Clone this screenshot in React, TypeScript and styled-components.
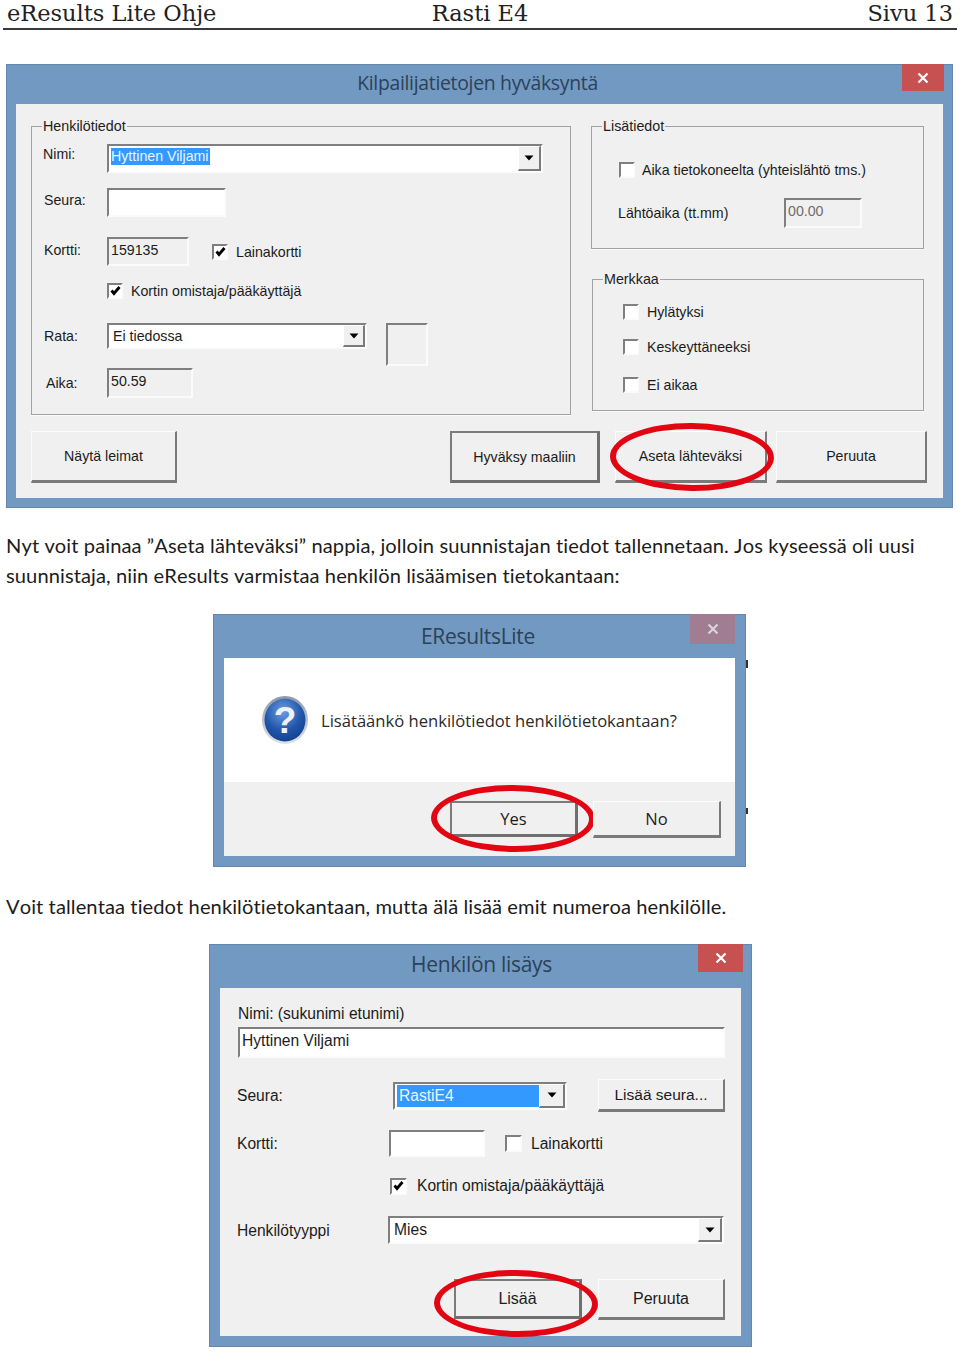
import React from "react";
import styled, { createGlobalStyle } from "styled-components";

const Global = createGlobalStyle`
  html, body { margin: 0; padding: 0; background: #fff; }
  #root { width: 960px; height: 1352px; overflow: hidden; }
`;

const Page = styled.div`
  width: 960px;
  height: 1352px;
  display: flex;
  flex-direction: column;
  background: #fff;
`;

const Header = styled.header`
  margin: 0 3px;
  box-sizing: content-box;
  height: 27px;
  display: grid;
  grid-template-columns: 1fr auto 1fr;
  align-items: center;
  padding: 0 4px 1px;
  border-bottom: 2px solid #3a3a3a;
  font-family: "DejaVu Serif", serif;
  font-size: 22.5px;
  line-height: 27px;
  color: #222;
`;

const HeaderRight = styled.span`
  text-align: right;
`;

const Win = styled.section<{ $x: number; $w: number; $top: number; $frame: number; $fs: number }>`
  position: relative;
  box-sizing: border-box;
  margin-top: ${(p) => p.$top}px;
  margin-left: ${(p) => p.$x}px;
  width: ${(p) => p.$w}px;
  padding: 0 ${(p) => p.$frame}px ${(p) => p.$frame}px;
  background: #7199c1;
  box-shadow: inset 0 0 0 1px #6487ab;
  font-family: "Liberation Sans", Arial, sans-serif;
  font-size: ${(p) => p.$fs}px;
  color: #1c1c1c;
`;

const TitleBar = styled.div<{ $h: number; $frame: number; $rm: number }>`
  height: ${(p) => p.$h}px;
  margin: 0 ${(p) => p.$rm - p.$frame}px 0 -${(p) => p.$frame}px;
  display: flex;
  align-items: flex-start;
`;

const Title = styled.div<{ $pad: number; $h: number; $size: number }>`
  flex: 1;
  padding-left: ${(p) => p.$pad}px;
  height: ${(p) => p.$h}px;
  line-height: ${(p) => p.$h}px;
  text-align: center;
  font-family: "Open Sans", sans-serif;
  font-size: ${(p) => p.$size}px;
  letter-spacing: -0.3px;
  color: #2c4258;
`;

const Close = styled.div<{ $w: number; $h: number; $bg: string }>`
  width: ${(p) => p.$w}px;
  height: ${(p) => p.$h}px;
  background: ${(p) => p.$bg};
  display: flex;
  align-items: center;
  justify-content: center;
`;

const CloseGlyph = ({ color = "#fff" }: { color?: string }) => (
  <svg width="12" height="12" viewBox="0 0 12 12">
    <path d="M1.5 1.5 10.5 10.5 M10.5 1.5 1.5 10.5" stroke={color} strokeWidth="2.2" fill="none" />
  </svg>
);

const Body = styled.div<{ $pad?: string }>`
  background: #f0f0f0;
  padding: ${(p) => p.$pad ?? "0"};
`;

const Columns = styled.div`
  display: flex;
  align-items: flex-start;
`;

const Stack = styled.div<{ $ml: number; $w: number }>`
  margin-left: ${(p) => p.$ml}px;
  width: ${(p) => p.$w}px;
  display: flex;
  flex-direction: column;
`;

const Group = styled.fieldset<{ $h: number; $mt?: number; $ml?: number }>`
  box-sizing: border-box;
  margin: ${(p) => p.$mt ?? 0}px 0 0 ${(p) => p.$ml ?? 0}px;
  min-width: 0;
  width: calc(100% - ${(p) => p.$ml ?? 0}px);
  height: ${(p) => p.$h}px;
  padding: 0 0 0 10px;
  border: 1px solid #a2a2a2;
  box-shadow: 0 1px 0 #fbfbfb;
`;

const Legend = styled.legend`
  margin-left: 0;
  padding: 0 1px;
  height: 18px;
  line-height: 18px;
  font-size: 14.3px;
`;

const Row = styled.div<{ $mt: number; $ml?: number; $align?: string }>`
  display: flex;
  align-items: ${(p) => p.$align ?? "center"};
  margin-top: ${(p) => p.$mt}px;
  margin-left: ${(p) => p.$ml ?? 0}px;
`;

const Label = styled.div<{ $w: number; $ml?: number; $h?: number }>`
  box-sizing: border-box;
  flex: none;
  width: ${(p) => p.$w}px;
  padding-left: ${(p) => p.$ml ?? 0}px;
  ${(p) => (p.$h ? `height: ${p.$h}px; line-height: ${p.$h}px;` : "")}
  white-space: nowrap;
`;

const Field = styled.div<{ $w: number; $h: number; $grey?: boolean; $ml?: number; $color?: string; $mb?: number }>`
  box-sizing: border-box;
  flex: none;
  width: ${(p) => p.$w}px;
  height: ${(p) => p.$h}px;
  margin-left: ${(p) => p.$ml ?? 0}px;
  border-style: solid;
  border-width: 2px;
  border-color: #7f7f7f #fbfbfb #fbfbfb #7f7f7f;
  background: ${(p) => (p.$grey ? "#f0f0f0" : "#fff")};
  color: ${(p) => p.$color ?? "inherit"};
  padding: 0 0 ${(p) => p.$mb ?? 4}px 2px;
  display: flex;
  align-items: center;
  white-space: nowrap;
`;

const Selected = styled.span<{ $fill?: boolean }>`
  background: #3399ff;
  color: #eaf4ff;
  line-height: 17px;
  height: 17px;
  padding: 0 1px 0 0;
  margin-bottom: 4px;
  ${(p) => (p.$fill ? "flex: 1; height: 22px; line-height: 22px; padding-left: 2px; margin-bottom: 0;" : "")}
`;

const ComboText = styled.div<{ $pl?: number }>`
  flex: 1;
  padding-left: ${(p) => p.$pl ?? 0}px;
  display: flex;
  align-items: center;
  min-width: 0;
`;

const ComboBtn = styled.div<{ $w: number }>`
  box-sizing: border-box;
  flex: none;
  align-self: stretch;
  width: ${(p) => p.$w}px;
  background: #f0f0f0;
  border-style: solid;
  border-width: 1px 2px 2px 1px;
  border-color: #fff #7a7a7a #7a7a7a #fff;
  display: flex;
  align-items: center;
  justify-content: center;
`;

const Arrow = () => (
  <svg width="10" height="6" viewBox="0 0 10 6">
    <path d="M0.5 0.5 H9.5 L5 5.5 Z" fill="#000" />
  </svg>
);

const ComboField = styled(Field)`
  padding: 0 0 0 1px;
  align-items: center;
`;

const Combo = ({ w, h, btn, ml, children, pl }: { w: number; h: number; btn: number; ml?: number; pl?: number; children: React.ReactNode }) => (
  <ComboField $w={w} $h={h} $ml={ml} $mb={0}>
    <ComboText $pl={pl}>{children}</ComboText>
    <ComboBtn $w={btn}>
      <Arrow />
    </ComboBtn>
  </ComboField>
);

const Swatch = styled(Field)`
  background: #f0f0f0;
`;

const Check = styled.label<{ $gap: number; $ml?: number }>`
  display: flex;
  align-self: center;
  align-items: center;
  gap: ${(p) => p.$gap}px;
  margin-left: ${(p) => p.$ml ?? 0}px;
  white-space: nowrap;
`;

const Box = styled.span<{ $size: number }>`
  box-sizing: border-box;
  flex: none;
  width: ${(p) => p.$size}px;
  height: ${(p) => p.$size}px;
  border-style: solid;
  border-width: 2px;
  border-color: #7f7f7f #fbfbfb #fbfbfb #7f7f7f;
  background: #fff;
  display: flex;
  align-items: center;
  justify-content: center;
`;

const Tick = () => (
  <svg width="11" height="10" viewBox="0 0 11 10">
    <path d="M1.5 4.5 4 7.5 9.5 1" stroke="#000" strokeWidth="2.8" fill="none" />
  </svg>
);

const CheckItem = ({ on, gap, size = 16, ml, children }: { on?: boolean; gap: number; size?: number; ml?: number; children: React.ReactNode }) => (
  <Check $gap={gap} $ml={ml}>
    <Box $size={size}>{on ? <Tick /> : null}</Box>
    <span>{children}</span>
  </Check>
);

const Btn = styled.div<{ $w: number; $h: number; $ml?: number; $default?: boolean; $size?: number; $font?: string }>`
  position: relative;
  box-sizing: border-box;
  flex: none;
  width: ${(p) => p.$w}px;
  height: ${(p) => p.$h}px;
  margin-left: ${(p) => p.$ml ?? 0}px;
  background: #f0f0f0;
  border-style: solid;
  border-width: ${(p) => (p.$default ? "2px 3px 3px 2px" : "1px 2px 3px 1px")};
  border-color: ${(p) => (p.$default ? "#7b7b7b #6f6f6f #6f6f6f #7b7b7b" : "#fcfcfc #7a7a7a #7a7a7a #fcfcfc")};
  display: flex;
  align-items: center;
  justify-content: center;
  font-size: ${(p) => p.$size ?? 14.2}px;
  ${(p) => (p.$font ? `font-family: ${p.$font};` : "")}
`;

const Oval = styled.div<{ $t: number; $r: number; $b: number; $l: number }>`
  position: absolute;
  top: ${(p) => p.$t}px;
  right: ${(p) => p.$r}px;
  bottom: ${(p) => p.$b}px;
  left: ${(p) => p.$l}px;
  border: 6px solid #e20613;
  border-radius: 50%;
  transform: rotate(0.6deg);
`;

const ButtonBar = styled.div<{ $mt: number; $ml: number; $pb: number }>`
  display: flex;
  margin: ${(p) => p.$mt}px 0 0 ${(p) => p.$ml}px;
  padding-bottom: ${(p) => p.$pb}px;
`;

const Para = styled.p<{ $mt: number }>`
  margin: ${(p) => p.$mt}px 0 0 6px;
  font-family: "Lato", "Open Sans", sans-serif;
  font-size: 20.1px;
  line-height: 30px;
  letter-spacing: 0.09px;
  font-variant-ligatures: none;
  font-kerning: none;
  color: #1c1c1c;
  white-space: nowrap;
`;

const MessageArea = styled.div`
  height: 124px;
  background: #fff;
  display: flex;
  align-items: center;
  padding-left: 38px;
  gap: 13px;
`;

const Message = styled.div`
  font-family: "Open Sans", sans-serif;
  font-size: 16.6px;
  color: #2a2a2a;
  white-space: nowrap;
`;

const ButtonArea = styled.div`
  height: 55px;
  padding-top: 19px;
  display: flex;
  align-items: flex-start;
`;

const BleedMark = styled.span<{ $t: number; $h: number }>`
  position: absolute;
  left: 533px;
  top: ${(p) => p.$t}px;
  width: 2px;
  height: ${(p) => p.$h}px;
  background: #333;
`;

const QuestionIcon = () => (
  <svg width="46" height="48" viewBox="0 0 46 48">
    <defs>
      <radialGradient id="qg" cx="0.45" cy="0.3" r="0.8">
        <stop offset="0" stopColor="#6f9fe0" />
        <stop offset="0.55" stopColor="#2257ac" />
        <stop offset="1" stopColor="#103a86" />
      </radialGradient>
      <linearGradient id="qr" x1="0" y1="0" x2="0" y2="1">
        <stop offset="0" stopColor="#8d9aa8" />
        <stop offset="1" stopColor="#dfe4ea" />
      </linearGradient>
    </defs>
    <ellipse cx="23" cy="24" rx="23" ry="24" fill="url(#qr)" />
    <ellipse cx="23" cy="24" rx="20.5" ry="21.5" fill="url(#qg)" />
    <text x="23" y="37" textAnchor="middle" fontFamily="Liberation Sans, sans-serif" fontWeight="700" fontSize="37" fill="#eef2f8">?</text>
  </svg>
);

const titleFont = `"Open Sans", sans-serif`;

export default function App() {
  return (
    <Page>
      <Global />
      <Header>
        <span>eResults Lite Ohje</span>
        <span>Rasti E4</span>
        <HeaderRight>Sivu 13</HeaderRight>
      </Header>

      <Win $x={6} $w={947} $top={34} $frame={10} $fs={14.2}>
        <TitleBar $h={40} $frame={10} $rm={9}>
          <Title $pad={47} $h={38} $size={19.4}>Kilpailijatietojen hyväksyntä</Title>
          <Close $w={42} $h={27} $bg="#c75050"><CloseGlyph /></Close>
        </TitleBar>
        <Body $pad="13px 0 0 0">
          <Columns>
            <Stack $ml={15} $w={540}>
              <Group $h={298}>
                <Legend>Henkilötiedot</Legend>
                <Row $mt={9} $align="flex-start">
                  <Label $w={65} $ml={1} $h={21}>Nimi:</Label>
                  <Combo w={436} h={29} btn={23} pl={1}><Selected>Hyttinen Viljami</Selected></Combo>
                </Row>
                <Row $mt={15} $align="flex-start">
                  <Label $w={65} $ml={2} $h={24}>Seura:</Label>
                  <Field $w={119} $h={29} />
                </Row>
                <Row $mt={20} $align="flex-start">
                  <Label $w={65} $ml={2} $h={26}>Kortti:</Label>
                  <Field $w={82} $h={29} $grey $mb={3}>159135</Field>
                  <CheckItem on gap={8} ml={23}>Lainakortti</CheckItem>
                </Row>
                <Row $mt={17} $ml={65}>
                  <CheckItem on gap={8}>Kortin omistaja/pääkäyttäjä</CheckItem>
                </Row>
                <Row $mt={24} $align="flex-start">
                  <Label $w={65} $ml={2} $h={26}>Rata:</Label>
                  <Combo w={260} h={26} btn={22} pl={3}>Ei tiedossa</Combo>
                  <Swatch $w={42} $h={43} $ml={19} $grey />
                </Row>
                <Row $mt={2}>
                  <Label $w={65} $ml={4} $h={28}>Aika:</Label>
                  <Field $w={86} $h={30} $grey>50.59</Field>
                </Row>
              </Group>
            </Stack>
            <Stack $ml={20} $w={333}>
              <Group $h={132}>
                <Legend>Lisätiedot</Legend>
                <Row $mt={27} $ml={17}>
                  <CheckItem gap={7}>Aika tietokoneelta (yhteislähtö tms.)</CheckItem>
                </Row>
                <Row $mt={20} $ml={16}>
                  <Label $w={166}>Lähtöaika (tt.mm)</Label>
                  <Field $w={78} $h={30} $grey $color="#6d6d6d">00.00</Field>
                </Row>
              </Group>
              <Group $h={141} $mt={21} $ml={1}>
                <Legend>Merkkaa</Legend>
                <Row $mt={16} $ml={20}><CheckItem gap={8}>Hylätyksi</CheckItem></Row>
                <Row $mt={19} $ml={20}><CheckItem gap={8}>Keskeyttäneeksi</CheckItem></Row>
                <Row $mt={22} $ml={20}><CheckItem gap={8}>Ei aikaa</CheckItem></Row>
              </Group>
            </Stack>
          </Columns>
          <ButtonBar $mt={16} $ml={15} $pb={15}>
            <Btn $w={146} $h={52}>Näytä leimat</Btn>
            <Btn $w={150} $h={52} $ml={273} $default>Hyväksy maaliin</Btn>
            <Btn $w={152} $h={52} $ml={15}>
              Aseta lähteväksi
              <Oval $t={-9} $r={-9} $b={-11} $l={-6} />
            </Btn>
            <Btn $w={151} $h={52} $ml={9}>Peruuta</Btn>
          </ButtonBar>
        </Body>
      </Win>

      <Para $mt={22}>
        Nyt voit painaa ”Aseta lähteväksi” nappia, jolloin suunnistajan tiedot tallennetaan. Jos kyseessä oli uusi
        <br />
        suunnistaja, niin eResults varmistaa henkilön lisäämisen tietokantaan:
      </Para>

      <Win $x={213} $w={533} $top={24} $frame={11} $fs={16}>
        <TitleBar $h={44} $frame={11} $rm={11}>
          <Title $pad={53} $h={44} $size={21}>EResultsLite</Title>
          <Close $w={45} $h={30} $bg="#a17d93"><CloseGlyph color="#d8d4dc" /></Close>
        </TitleBar>
        <Body>
          <MessageArea>
            <QuestionIcon />
            <Message>Lisätäänkö henkilötiedot henkilötietokantaan?</Message>
          </MessageArea>
          <ButtonArea>
            <Btn $w={128} $h={36} $ml={226} $default $size={16.5} $font={titleFont}>
              Yes
              <Oval $t={-18} $r={-20} $b={-18} $l={-21} />
            </Btn>
            <Btn $w={128} $h={37} $ml={15} $size={16.5} $font={titleFont}>No</Btn>
          </ButtonArea>
        </Body>
        <BleedMark $t={46} $h={8} />
        <BleedMark $t={194} $h={6} />
      </Win>

      <Para $mt={24}>Voit tallentaa tiedot henkilötietokantaan, mutta älä lisää emit numeroa henkilölle.</Para>

      <Win $x={209} $w={543} $top={23} $frame={11} $fs={15.6}>
        <TitleBar $h={44} $frame={11} $rm={9}>
          <Title $pad={56} $h={41} $size={21}>Henkilön lisäys</Title>
          <Close $w={45} $h={28} $bg="#c75050"><CloseGlyph /></Close>
        </TitleBar>
        <Body $pad="18px 0 0 17px">
          <Label $w={300} $ml={1} $h={16}>Nimi: (sukunimi etunimi)</Label>
          <Row $mt={5} $ml={1}>
            <Field $w={487} $h={31} $mb={4}>Hyttinen Viljami</Field>
          </Row>
          <Row $mt={21}>
            <Label $w={156}>Seura:</Label>
            <Combo w={174} h={28} btn={26} pl={1}><Selected $fill>RastiE4</Selected></Combo>
            <Btn $w={127} $h={33} $ml={31} $size={15.5}>Lisää seura...</Btn>
          </Row>
          <Row $mt={18}>
            <Label $w={152} $h={27}>Kortti:</Label>
            <Field $w={96} $h={27} />
            <CheckItem gap={9} size={17} ml={20}>Lainakortti</CheckItem>
          </Row>
          <Row $mt={20} $ml={153}>
            <CheckItem on gap={10} size={17}>Kortin omistaja/pääkäyttäjä</CheckItem>
          </Row>
          <Row $mt={21} $align="flex-start">
            <Label $w={151} $h={30}>Henkilötyyppi</Label>
            <Combo w={336} h={28} btn={24} pl={3}>Mies</Combo>
          </Row>
          <ButtonBar $mt={33} $ml={217} $pb={16}>
            <Btn $w={128} $h={40} $default $size={16}>
              Lisää
              <Oval $t={-11} $r={-19} $b={-21} $l={-22} />
            </Btn>
            <Btn $w={127} $h={41} $ml={16} $size={16}>Peruuta</Btn>
          </ButtonBar>
        </Body>
      </Win>
    </Page>
  );
}
